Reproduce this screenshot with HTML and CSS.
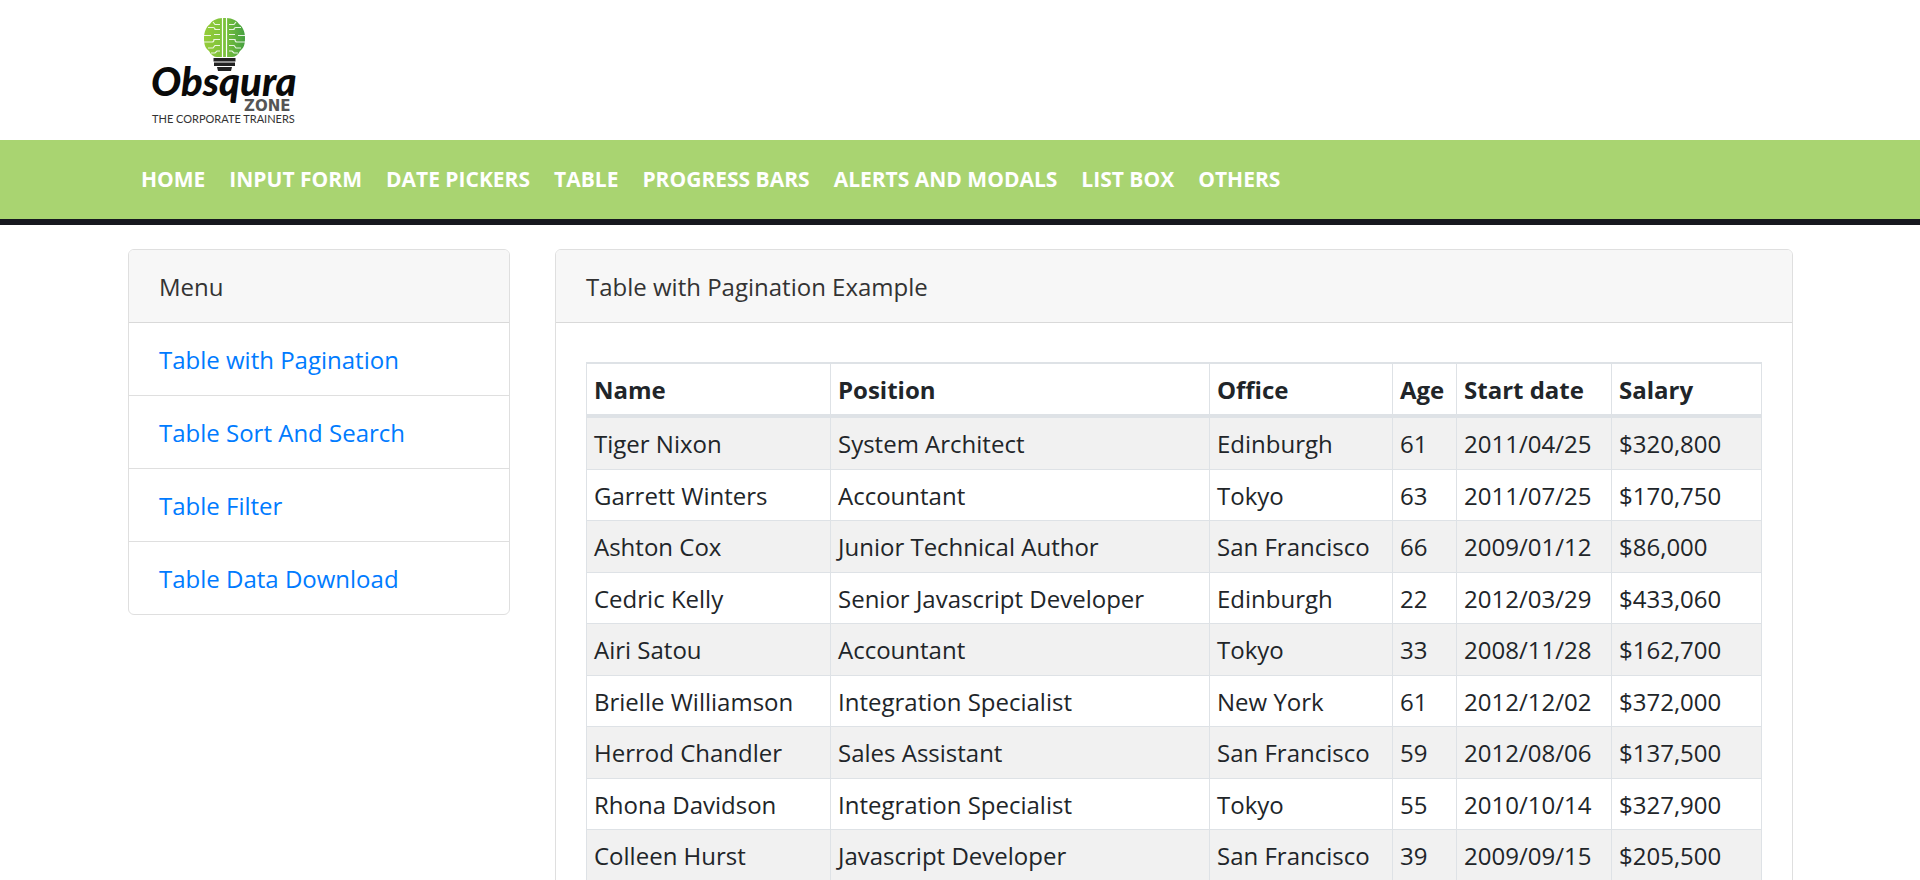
FILE: index.html
```html
<!DOCTYPE html>
<html lang="en">
<head>
<meta charset="utf-8">
<title>Table with Pagination Example</title>
<link rel="stylesheet" href="styles.css">
</head>
<body>
<header class="site-header">
  <div class="container">
    <a class="logo" href="#" aria-label="Obsqura Zone, the corporate trainers">
      <svg class="logo-art" viewBox="140 0 168 140" width="168" height="140">
        <defs>
          <linearGradient id="bulb" x1="0" x2="1" y1="0" y2="0">
            <stop offset="0" stop-color="#95cc38"/>
            <stop offset=".5" stop-color="#7cc23c"/>
            <stop offset="1" stop-color="#45a040"/>
          </linearGradient>
        </defs>
        <path fill="url(#bulb)" d="M224.500 18C219 18 213 19 210 24C206 27 204 32 204 38C204 44 205 48 209 51C211 55 214 57 217 57H232C235 57 238 55 240 51C244 48 245 44 245 38C245 32 243 27 239 24C236 19 230 18 224.500 18Z"/>
        <g fill="none" stroke="#fff" stroke-width="1.200">
          <path d="M222.500 18V57M226.500 18V57"/>
          <path stroke-opacity=".85" d="M208 27.500H213Q215 27.500 215 29.500H220M204 35.500H211M214 34.500H220M204 42H212Q214 42 214 39.500H220M208 48H213L215 45.500H220M211 53H215L217 51H220M213 22L215 24.500H220"/>
          <path stroke-opacity=".85" d="M241 27.500H236Q234 27.500 234 29.500H229M245 35.500H238M235 34.500H229M245 42H237Q235 42 235 39.500H229M241 48H236L234 45.500H229M238 53H234L232 51H229M236 22L234 24.500H229"/>
        </g>
        <path fill="#222" d="M213.500 58H235.500V61.500H213.500ZM214 62.500H235V66H214ZM217 67H232L231 71H218Z"/>
        <text class="logo-name" x="151" y="96">Obsqura</text>
        <text class="logo-zone" x="244" y="111">ZONE</text>
        <text class="logo-tag" x="152" y="123">THE CORPORATE TRAINERS</text>
      </svg>
    </a>
  </div>
</header>
<nav class="main-nav" aria-label="Main">
  <ul class="container nav-list">
    <li><a href="#">HOME</a></li>
    <li><a href="#">INPUT FORM</a></li>
    <li><a href="#">DATE PICKERS</a></li>
    <li><a href="#">TABLE</a></li>
    <li><a href="#">PROGRESS BARS</a></li>
    <li><a href="#">ALERTS AND MODALS</a></li>
    <li><a href="#">LIST BOX</a></li>
    <li><a href="#">OTHERS</a></li>
  </ul>
</nav>
<main class="container layout">
  <aside class="card">
    <div class="card-header">Menu</div>
    <ul class="menu">
      <li><a href="#">Table with Pagination</a></li>
      <li><a href="#">Table Sort And Search</a></li>
      <li><a href="#">Table Filter</a></li>
      <li><a href="#">Table Data Download</a></li>
    </ul>
  </aside>
  <section class="card">
    <div class="card-header">Table with Pagination Example</div>
    <div class="card-body">
      <table class="data">
        <colgroup>
          <col class="c-name"><col class="c-position"><col class="c-office"><col class="c-age"><col class="c-date"><col>
        </colgroup>
        <thead>
          <tr><th scope="col">Name</th><th scope="col">Position</th><th scope="col">Office</th><th scope="col">Age</th><th scope="col">Start date</th><th scope="col">Salary</th></tr>
        </thead>
        <tbody>
          <tr><td>Tiger Nixon</td><td>System Architect</td><td>Edinburgh</td><td>61</td><td>2011/04/25</td><td>$320,800</td></tr>
          <tr><td>Garrett Winters</td><td>Accountant</td><td>Tokyo</td><td>63</td><td>2011/07/25</td><td>$170,750</td></tr>
          <tr><td>Ashton Cox</td><td>Junior Technical Author</td><td>San Francisco</td><td>66</td><td>2009/01/12</td><td>$86,000</td></tr>
          <tr><td>Cedric Kelly</td><td>Senior Javascript Developer</td><td>Edinburgh</td><td>22</td><td>2012/03/29</td><td>$433,060</td></tr>
          <tr><td>Airi Satou</td><td>Accountant</td><td>Tokyo</td><td>33</td><td>2008/11/28</td><td>$162,700</td></tr>
          <tr><td>Brielle Williamson</td><td>Integration Specialist</td><td>New York</td><td>61</td><td>2012/12/02</td><td>$372,000</td></tr>
          <tr><td>Herrod Chandler</td><td>Sales Assistant</td><td>San Francisco</td><td>59</td><td>2012/08/06</td><td>$137,500</td></tr>
          <tr><td>Rhona Davidson</td><td>Integration Specialist</td><td>Tokyo</td><td>55</td><td>2010/10/14</td><td>$327,900</td></tr>
          <tr><td>Colleen Hurst</td><td>Javascript Developer</td><td>San Francisco</td><td>39</td><td>2009/09/15</td><td>$205,500</td></tr>
        </tbody>
      </table>
    </div>
  </section>
</main>
</body>
</html>
```
FILE: styles.css
```css
* { box-sizing: border-box; }
body {
  margin: 0;
  background: #fff;
  color: #212529;
  font-family: "Open Sans", sans-serif;
  font-size: 24px;
  line-height: 36px;
}
a { color: #007bff; text-decoration: none; }
ul { list-style: none; margin: 0; padding: 0; }
.container {
  max-width: 1710px;
  margin: 0 auto;
  padding: 0 22px 0 23px;
}
.logo { display: block; padding-left: 12px; }
.logo-art { display: block; }
.logo-name { font: italic 900 40px Lato, sans-serif; fill: #0a0a0a; }
.logo-zone { font: 700 15px "DejaVu Sans", sans-serif; fill: #555; }
.logo-tag { font: 400 11px Lato, sans-serif; fill: #333; }

.main-nav { background: #a9d471; border-bottom: 6px solid #17181f; }
.nav-list { display: flex; flex-wrap: wrap; padding-left: 24px; }
.nav-list a {
  display: block;
  padding: 23px 12px 24px;
  font-size: 21px;
  line-height: 32px;
  font-weight: 700;
  color: #fff;
}

.layout {
  display: grid;
  grid-template-columns: 382fr 1238fr;
  gap: 45px;
  align-items: start;
  padding-top: 24px;
  padding-bottom: 24px;
}
.card {
  border: 1px solid #dfdfdf;
  border-radius: 6px;
  background: #fff;
  overflow: hidden;
}
.card-header {
  padding: 19px 30px 17px;
  background: #f7f7f7;
  border-bottom: 1px solid #d9d9d9;
  color: #333;
}
.menu li { padding: 19px 30px 17px; }
.menu li + li { border-top: 1px solid #dfdfdf; }
.card-body { padding: 39px 30px 30px; }

.data {
  width: 100%;
  table-layout: fixed;
  border-collapse: separate;
  border-spacing: 0;
  border-top: 2px solid #dee2e6;
  border-left: 1px solid #dee2e6;
}
.c-name { width: 244px; }
.c-position { width: 379px; }
.c-office { width: 183px; }
.c-age { width: 64px; }
.c-date { width: 155px; }
.data th, .data td {
  padding: 8px 7px 6px;
  text-align: left;
  border-right: 1px solid #dee2e6;
  border-bottom: 1px solid #dee2e6;
  white-space: nowrap;
}
.data th { font-weight: 700; border-bottom-width: 4px; }
.data tbody tr:nth-child(odd) td { padding-bottom: 7px; background: #f1f1f1; }
```
